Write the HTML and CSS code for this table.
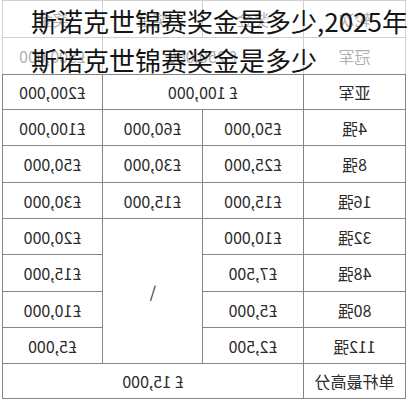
FILE: index.html
```
<!DOCTYPE html>
<html lang="zh-CN">
<head>
<meta charset="utf-8">
<title>斯诺克世锦赛奖金是多少</title>
<link rel="stylesheet" href="styles.css">
</head>
<body>
<div class="page">
  <div class="sheet">
    <div class="cell">轮次</div>
    <div class="cell">奖金</div>
    <div class="cell">奖金</div>
    <div class="cell">奖金</div>

    <div class="cell">冠军</div>
    <div class="cell span2">£ 250,000</div>
    <div class="cell">£500,000</div>

    <div class="cell">亚军</div>
    <div class="cell span2">£ 100,000</div>
    <div class="cell">£200,000</div>

    <div class="cell">4强</div>
    <div class="cell">£50,000</div>
    <div class="cell">£60,000</div>
    <div class="cell">£100,000</div>

    <div class="cell">8强</div>
    <div class="cell">£25,000</div>
    <div class="cell">£30,000</div>
    <div class="cell">£50,000</div>

    <div class="cell">16强</div>
    <div class="cell">£15,000</div>
    <div class="cell">£15,000</div>
    <div class="cell">£30,000</div>

    <div class="cell">32强</div>
    <div class="cell">£10,000</div>
    <div class="cell rows4"><span class="unflip">/</span></div>
    <div class="cell">£20,000</div>

    <div class="cell">48强</div>
    <div class="cell">£7,500</div>
    <div class="cell">£15,000</div>

    <div class="cell">80强</div>
    <div class="cell">£5,000</div>
    <div class="cell">£10,000</div>

    <div class="cell">112强</div>
    <div class="cell">£2,500</div>
    <div class="cell">£5,000</div>

    <div class="cell">单杆最高分</div>
    <div class="cell span3">£ 15,000</div>
  </div>
  <div class="fade"></div>
  <div class="title">
    <p>斯诺克世锦赛奖金是多少,2025年</p>
    <p>斯诺克世锦赛奖金是多少</p>
  </div>
</div>
</body>
</html>
```

FILE: styles.css
```
html, body {
  margin: 0;
  padding: 0;
  background: #ffffff;
}

.page {
  position: relative;
  width: 407px;
  height: 400px;
  overflow: hidden;
  font-family: "Noto Sans CJK SC", "Noto Sans", sans-serif;
}

.sheet {
  margin-left: 2px;
  width: 404px;
  box-sizing: border-box;
  display: grid;
  grid-template-columns: 101px 100px 99px 99px;
  grid-template-rows: 36px 36px 34px 35px 36px 35px 35px 36px 35px 35px 34px;
  gap: 1px;
  padding: 1px;
  background: #858585;
  transform: scaleX(-1);
}

.cell {
  background: #ffffff;
  display: flex;
  align-items: center;
  justify-content: center;
  font-size: 16px;
  line-height: 1;
  color: #2b2b2b;
  white-space: nowrap;
}

.span2 {
  grid-column: span 2;
}

.span3 {
  grid-column: span 3;
}

.rows4 {
  grid-row: span 4;
}

.unflip {
  display: inline-block;
  transform: scaleX(-1);
  font-size: 16px;
}

.fade {
  position: absolute;
  left: 0;
  top: 0;
  width: 407px;
  height: 74px;
  background: rgba(255, 255, 255, 0.62);
}

.title {
  position: absolute;
  left: 31px;
  top: 1px;
  color: #141414;
  font-size: 26px;
  line-height: 39px;
  white-space: nowrap;
}

.title p {
  margin: 0;
}
```
